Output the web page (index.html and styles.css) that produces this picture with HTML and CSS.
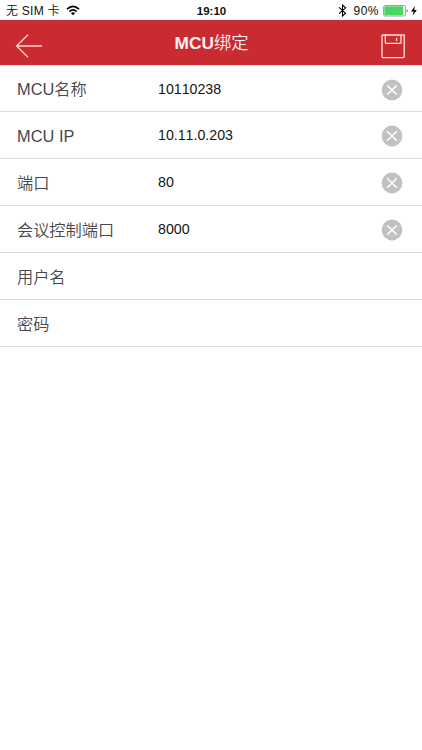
FILE: index.html
```html
<!DOCTYPE html>
<html lang="zh-CN">
<head>
<meta charset="utf-8">
<title>MCU绑定</title>
<link rel="stylesheet" href="styles.css">
</head>
<body>
<div class="status">
  <div class="carrier"><span>无 SIM 卡</span>
    <svg class="wifi" width="14" height="11" viewBox="0 0 14 11"><g fill="none" stroke="#000" stroke-width="1.6"><path d="M1 4.2Q7-1.6 13 4.2"/><path d="M3.4 6.6Q7 3.2 10.6 6.6"/></g><path d="M4.9 8.1Q7 6.4 9.1 8.1L7 10.3z"/></svg>
  </div>
  <div class="time">19:10</div>
  <div class="power">
    <svg class="bluetooth" width="9" height="13" viewBox="0 0 9 13"><path d="M1 3.4L7.6 9.2L4.5 12V1L7.6 3.8L1 9.6" fill="none" stroke="#000" stroke-width="1.1"/></svg>
    <span class="percent">90%</span>
    <svg class="battery" width="26" height="12" viewBox="0 0 26 12"><rect x=".5" y=".5" width="22" height="10.5" rx="1.6" fill="#fff" stroke="#8b8b8b" stroke-width=".8"/><rect x="1.3" y="1.3" width="19" height="9" rx=".8" fill="#4cd562"/><path d="M23.8 4Q25.6 5.8 23.8 7.6z"/></svg>
    <svg class="bolt" width="6" height="10" viewBox="0 0 6 10"><path d="M3.9 0L.1 5.4H2.6L1.7 9.6L5.8 3.9H3.2z"/></svg>
  </div>
</div>
<header class="header">
  <svg class="back" width="28" height="26" viewBox="0 0 28 26"><path d="M13 1.7L1.6 13L13 24.3M1.6 13H27" fill="none" stroke="#ffd5d5" stroke-width="1.3"/></svg>
  <h1 class="title"><b>MCU</b>绑定</h1>
  <svg class="save" width="25" height="25" viewBox="0 0 25 25"><g fill="none" stroke="#ffe0e0" stroke-width="1.3"><path d="M1.8 1H23.2V22.5Q23.2 23.7 22 23.7H2.3Q1 23.7 1 22.4V1.8Q1 1 1.8 1z"/><path d="M4.3 1V8.5Q4.3 9.3 5.1 9.3H19.2Q20 9.3 20 8.5V1M15.6 3.7V7"/></g></svg>
</header>
<main class="form">
  <div class="row"><span class="label"><span class="latin">MCU</span>名称</span><span class="value">10110238</span><svg class="clear" width="22" height="22" viewBox="0 0 22 22"><circle cx="11" cy="11" r="10.4"/><path d="M6.2 6.2L15.8 15.8M15.8 6.2L6.2 15.8"/></svg></div>
  <div class="row"><span class="label"><span class="latin">MCU IP</span></span><span class="value">10.11.0.203</span><svg class="clear" width="22" height="22" viewBox="0 0 22 22"><circle cx="11" cy="11" r="10.4"/><path d="M6.2 6.2L15.8 15.8M15.8 6.2L6.2 15.8"/></svg></div>
  <div class="row"><span class="label">端口</span><span class="value">80</span><svg class="clear" width="22" height="22" viewBox="0 0 22 22"><circle cx="11" cy="11" r="10.4"/><path d="M6.2 6.2L15.8 15.8M15.8 6.2L6.2 15.8"/></svg></div>
  <div class="row"><span class="label">会议控制端口</span><span class="value">8000</span><svg class="clear" width="22" height="22" viewBox="0 0 22 22"><circle cx="11" cy="11" r="10.4"/><path d="M6.2 6.2L15.8 15.8M15.8 6.2L6.2 15.8"/></svg></div>
  <div class="row"><span class="label">用户名</span></div>
  <div class="row"><span class="label">密码</span></div>
</main>
</body>
</html>
```
FILE: styles.css
```css
* { box-sizing: border-box; }
body {
  margin: 0;
  min-height: 750px;
  background: #fff;
  font-family: "Liberation Sans", "Noto Sans CJK SC", sans-serif;
}
svg { display: block; flex: none; }
.status {
  display: grid;
  grid-template-columns: 1fr auto 1fr;
  height: 20px;
  padding: 1px 5px 0 6px;
  font-size: 12px;
  line-height: 20px;
  color: #111;
  white-space: nowrap;
}
.carrier, .power { display: flex; align-items: center; height: 19px; }
.carrier { gap: 6px; letter-spacing: 0.25px; font-weight: 350; }
.time { font-weight: 700; font-size: 11.5px; font-kerning: none; }
.power { justify-content: flex-end; }
.percent { margin: 0 4px 0 6px; letter-spacing: 0.5px; }
.bolt { margin-left: 2px; }
.header {
  display: grid;
  grid-template-columns: 28px 1fr 28px;
  align-items: center;
  height: 46px;
  padding: 0 14px 1px 15px;
  background: #ca2b31;
  border-top: 1px solid #b5383c;
  border-bottom: 1px solid #ffdede;
}
.back { margin-top: 6px; }
.save { margin: 7px 0 0 1px; }
.title {
  margin: 0;
  font-size: 17.3px;
  line-height: 24px;
  font-weight: 350;
  color: #fff0f0;
  text-align: center;
}
.title b { font-weight: 700; }
.row {
  display: grid;
  grid-template-columns: 141px 1fr 22px;
  align-items: center;
  height: 47px;
  padding: 0 19px 0 17px;
  border-bottom: 1px solid #dcdcdc;
}
.form { margin-top: -1px; }
.row:first-child { border-top: 1px solid #ffe6e6; }
.label {
  font-size: 16.2px;
  line-height: 24px;
  color: #484848;
  font-weight: 350;
  padding-top: 1px;
}
.value { font-size: 14.2px; line-height: 20px; color: #151515; font-kerning: none; }
.latin { font-size: 16.4px; }
.clear { margin-top: 2px; fill: #c1c1c1; stroke: #fff; stroke-width: 1.5; }
.clear circle { stroke: none; }
```
